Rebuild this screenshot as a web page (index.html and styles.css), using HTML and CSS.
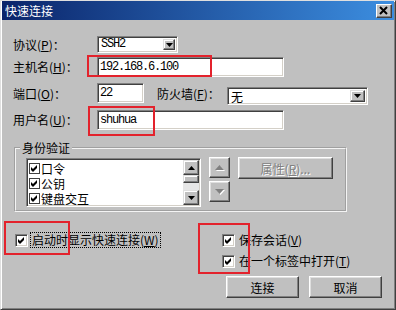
FILE: index.html
```html
<!DOCTYPE html>
<html lang="zh-CN">
<head>
    <meta charset="UTF-8">
    <title>快速连接</title>
    <link rel="stylesheet" href="styles.css">
</head>
<body>
<div class="window">
    <div class="titlebar">
        <span class="title">快速连接</span>
        <span class="close"><svg width="14" height="12" viewBox="0 0 14 12"><path d="M3 2 L10 9 M10 2 L3 9" stroke="#000" stroke-width="2"/></svg></span>
    </div>
    <div class="content">
        <div class="row row-proto">
            <span class="lbl">协议(<u>P</u>)：</span>
            <div class="select sel-proto">
                <span class="val">SSH2</span>
                <span class="drop"><svg width="7" height="4" viewBox="0 0 7 4"><polygon points="0,0 7,0 3.5,4" fill="#000"/></svg></span>
            </div>
        </div>
        <div class="row row-host">
            <span class="lbl">主机名(<u>H</u>)：</span>
            <div class="field wide">192.168.6.100</div>
        </div>
        <div class="row row-port">
            <span class="lbl">端口(<u>O</u>)：</span>
            <div class="field short">22</div>
            <span class="lbl lbl-fw">防火墙(<u>F</u>)：</span>
            <div class="select sel-fw">
                <span class="val cjk">无</span>
                <span class="drop"><svg width="7" height="4" viewBox="0 0 7 4"><polygon points="0,0 7,0 3.5,4" fill="#000"/></svg></span>
            </div>
        </div>
        <div class="row row-user">
            <span class="lbl">用户名(<u>U</u>)：</span>
            <div class="field wide">shuhua</div>
        </div>

        <fieldset class="group">
            <legend>身份验证</legend>
            <div class="group-inner">
                <div class="list">
                    <div class="items">
                        <div class="item"><span class="mini-check"><svg width="9" height="9" viewBox="0 0 9 9"><polygon points="1,3 3,5 7,1 7,4 3,8 1,6" fill="#000"/></svg></span><span class="item-text">口令</span></div>
                        <div class="item"><span class="mini-check"><svg width="9" height="9" viewBox="0 0 9 9"><polygon points="1,3 3,5 7,1 7,4 3,8 1,6" fill="#000"/></svg></span><span class="item-text">公钥</span></div>
                        <div class="item"><span class="mini-check"><svg width="9" height="9" viewBox="0 0 9 9"><polygon points="1,3 3,5 7,1 7,4 3,8 1,6" fill="#000"/></svg></span><span class="item-text">键盘交互</span></div>
                    </div>
                    <div class="scrollbar">
                        <span class="sb-btn"><svg width="7" height="4" viewBox="0 0 7 4"><polygon points="0,4 7,4 3.5,0" fill="#000"/></svg></span>
                        <span class="sb-thumb"></span>
                        <span class="sb-track"></span>
                        <span class="sb-btn"><svg width="7" height="4" viewBox="0 0 7 4"><polygon points="0,0 7,0 3.5,4" fill="#000"/></svg></span>
                    </div>
                </div>
                <div class="updown">
                    <span class="btn arrow-btn"><svg width="10" height="6" viewBox="0 0 10 6"><polygon points="1,6 10,6 5.5,1" fill="#fff"/><polygon points="0,5 9,5 4.5,0" fill="#808080"/></svg></span>
                    <span class="btn arrow-btn"><svg width="10" height="6" viewBox="0 0 10 6"><polygon points="1,1 10,1 5.5,6" fill="#fff"/><polygon points="0,0 9,0 4.5,5" fill="#808080"/></svg></span>
                </div>
                <span class="btn props disabled">属性(<u>R</u>)...</span>
            </div>
        </fieldset>

        <div class="options">
            <div class="opt-left">
                <div class="opt">
                    <span class="check"><svg width="11" height="11" viewBox="0 0 11 11"><polygon points="2,4 4,6 8,2 8,5 4,9 2,7" fill="#000"/></svg></span>
                    <span class="opt-text focus">启动时显示快速连接(<u>W</u>)</span>
                </div>
            </div>
            <div class="opt-right">
                <div class="opt">
                    <span class="check"><svg width="11" height="11" viewBox="0 0 11 11"><polygon points="2,4 4,6 8,2 8,5 4,9 2,7" fill="#000"/></svg></span>
                    <span class="opt-text">保存会话(<u>V</u>)</span>
                </div>
                <div class="opt">
                    <span class="check"><svg width="11" height="11" viewBox="0 0 11 11"><polygon points="2,4 4,6 8,2 8,5 4,9 2,7" fill="#000"/></svg></span>
                    <span class="opt-text">在一个标签中打开(<u>T</u>)</span>
                </div>
            </div>
        </div>

        <div class="actions">
            <span class="btn action">连接</span>
            <span class="btn action">取消</span>
        </div>
    </div>

    <span class="redbox rb-host"></span>
    <span class="redbox rb-user"></span>
    <span class="redbox rb-startup"></span>
    <span class="redbox rb-session"></span>
</div>
</body>
</html>
```

FILE: styles.css
```css
body{
    margin:0;
    background-color:#c0c0c0;
    font-family:"Noto Sans CJK SC", sans-serif;
    font-size:12px;
    color:#000;
}
.window{
    position:relative;
    width:396px;
    height:310px;
    box-sizing:border-box;
    padding:0 1px;
    background-color:#c0c0c0;
    border:1px solid;
    border-color:#dfdfdf #404040 #404040 #dfdfdf;
    box-shadow:inset 1px 1px #fff, inset -1px -1px #808080;
}
.titlebar{
    height:19px;
    display:flex;
    justify-content:space-between;
    align-items:flex-start;
    padding:0 2px 0 3px;
    background:linear-gradient(to right, #0a246a, #3c8ee0);
    color:#fff;
}
.title{
    line-height:19px;
    font-size:12px;
}
.close{
    margin-top:3px;
    width:16px;
    height:14px;
    box-sizing:border-box;
    display:flex;
    align-items:center;
    justify-content:center;
    background-color:#c0c0c0;
    border:1px solid;
    border-color:#fff #404040 #404040 #fff;
    box-shadow:inset -1px -1px #808080;
}
.content{
    padding:0 12px 0 11px;
}
.row{
    display:flex;
    align-items:center;
}
.row-proto{ margin-top:16px; height:17px; }
.row-host{ margin-top:4px; height:20px; }
.row-port{ margin-top:6px; height:20px; align-items:flex-start; }
.row-user{ margin-top:7px; height:20px; }
.lbl{
    width:84px;
    line-height:14px;
    white-space:nowrap;
}
.row-port .lbl{ margin-top:4px; }
.lbl-fw{
    width:70px;
    margin-left:13px;
}
.field, .select{
    box-sizing:border-box;
    background-color:#fff;
    border:1px solid;
    border-color:#808080 #fff #fff #808080;
    box-shadow:inset 1px 1px #404040, inset -1px -1px #d4d0c8;
}
.field{
    height:20px;
    padding-left:2px;
    font-family:"Liberation Mono", monospace;
    letter-spacing:-1.2px;
    line-height:18px;
}
.wide{ width:187px; }
.short{ width:47px; }
.select{
    display:flex;
    align-items:center;
    justify-content:space-between;
    padding:2px 2px 2px 3px;
}
.sel-proto{ width:81px; height:17px; }
.sel-fw{ width:141px; height:18px; margin-top:4px; }
.val{
    font-family:"Liberation Mono", monospace;
    letter-spacing:-1.2px;
    line-height:13px;
}
.val.cjk{
    font-family:"Noto Sans CJK SC", sans-serif;
    letter-spacing:0;
}
.drop{
    height:100%;
    box-sizing:border-box;
    display:flex;
    align-items:center;
    justify-content:center;
    background-color:#c0c0c0;
    border:1px solid;
    border-color:#dfdfdf #404040 #404040 #dfdfdf;
    box-shadow:inset -1px -1px #808080, inset 1px 1px #fff;
}
.sel-proto .drop{ width:12px; }
.sel-fw .drop{ width:15px; }

.group{
    margin:11px 0 0 1px;
    width:333px;
    box-sizing:border-box;
    padding:3px 0 3px 10px;
    border:2px groove #f4f4f4;
}
.group legend{
    margin-left:-6px;
    padding:0 2px;
    line-height:14px;
}
.group-inner{
    display:flex;
    align-items:flex-start;
}
.list{
    width:175px;
    height:49px;
    box-sizing:border-box;
    display:flex;
    overflow:hidden;
    background-color:#fff;
    border:1px solid;
    border-color:#808080 #fff #fff #808080;
    box-shadow:inset 1px 1px #404040, inset -1px -1px #d4d0c8;
    padding:1px;
}
.items{
    flex:1;
    padding-top:1px;
    overflow:hidden;
}
.item{
    height:15px;
    display:flex;
    align-items:center;
    white-space:nowrap;
}
.item-text{
    line-height:13px;
}
.mini-check{
    width:11px;
    height:11px;
    box-sizing:border-box;
    margin:0 1px 0 1px;
    display:flex;
    align-items:center;
    justify-content:center;
    border:1px solid #404040;
    background-color:#fff;
}
.scrollbar{
    width:16px;
    display:flex;
    flex-direction:column;
}
.sb-btn, .sb-thumb{
    box-sizing:border-box;
    display:flex;
    align-items:center;
    justify-content:center;
    background-color:#c0c0c0;
    border:1px solid;
    border-color:#dfdfdf #404040 #404040 #dfdfdf;
    box-shadow:inset -1px -1px #808080, inset 1px 1px #fff;
}
.sb-btn{ height:15px; }
.sb-thumb{ height:8px; }
.sb-track{
    flex:1;
    background-color:#e6e6e6;
}
.btn{
    box-sizing:border-box;
    display:flex;
    align-items:center;
    justify-content:center;
    background-color:#c0c0c0;
    border:1px solid;
    border-color:#fff #404040 #404040 #fff;
    box-shadow:inset -1px -1px #808080, inset 1px 1px #dfdfdf;
}
.updown{
    margin:-1px 0 0 8px;
    display:flex;
    flex-direction:column;
    gap:3px;
}
.arrow-btn{
    width:21px;
    height:21px;
}
.props{
    margin:-1px 0 0 8px;
    width:95px;
    height:22px;
}
.disabled{
    color:#808080;
    text-shadow:1px 1px #fff;
}

.options{
    display:flex;
    margin-top:21px;
}
.opt-left{
    width:207px;
    padding-left:2px;
}
.opt-right{
    display:flex;
    flex-direction:column;
    gap:7px;
}
.opt{
    display:flex;
    align-items:center;
    height:14px;
}
.check{
    width:13px;
    height:13px;
    box-sizing:border-box;
    display:flex;
    align-items:center;
    justify-content:center;
    background-color:#fff;
    border:1px solid;
    border-color:#808080 #fff #fff #808080;
    box-shadow:inset 1px 1px #404040, inset -1px -1px #d4d0c8;
}
.opt-text{
    margin-left:4px;
    line-height:14px;
    white-space:nowrap;
}
.opt-left .opt-text{ margin-left:3px; padding:0 1px; }
.focus{
    outline:1px dotted #000;
}
.actions{
    display:flex;
    justify-content:flex-end;
    gap:10px;
    margin-top:8px;
}
.action{
    width:73px;
    height:22px;
}

.redbox{
    position:absolute;
    box-sizing:border-box;
    border:2px solid #e3222c;
}
.rb-host{ left:86px; top:54px; width:125px; height:22px; }
.rb-user{ left:87px; top:105px; width:67px; height:30px; }
.rb-startup{ left:3px; top:220px; width:66px; height:34px; }
.rb-session{ left:197px; top:222px; width:52px; height:51px; }
```
